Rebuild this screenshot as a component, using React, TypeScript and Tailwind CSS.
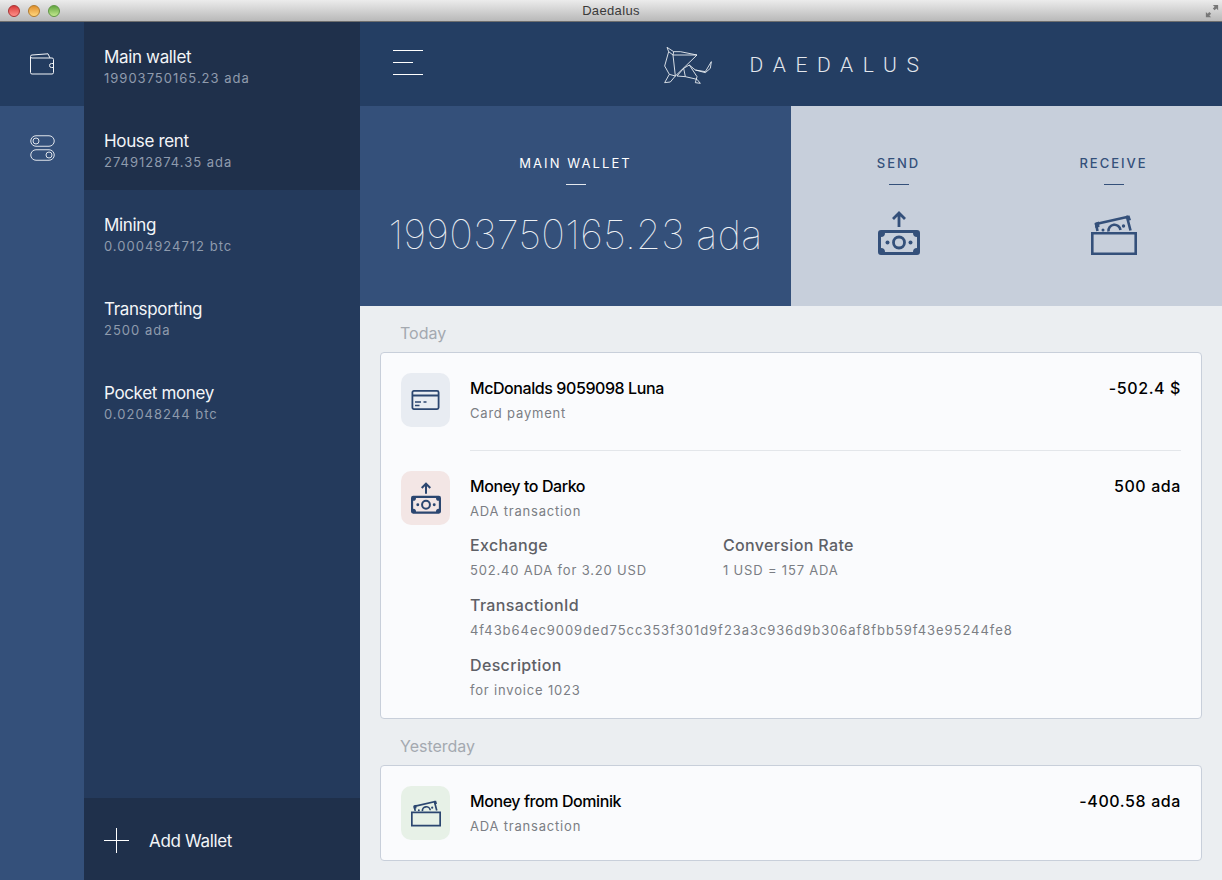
const sans = 'font-["Inter","Liberation_Sans",sans-serif]';

const wallets = [
  { name: 'Main wallet', amount: '19903750165.23 ada', active: true },
  { name: 'House rent', amount: '274912874.35 ada', active: true },
  { name: 'Mining', amount: '0.0004924712 btc', active: false },
  { name: 'Transporting', amount: '2500 ada', active: false },
  { name: 'Pocket money', amount: '0.02048244 btc', active: false },
];

function SendIcon({ className }: { className?: string }) {
  return (
    <svg viewBox="0 0 42 44" className={className} fill="none">
      <path d="M21 16V2M15 8l6-6 6 6" stroke="currentColor" strokeWidth="2.8" />
      <path
        fillRule="evenodd"
        fill="currentColor"
        d="M3 19h36a3 3 0 0 1 3 3v19a3 3 0 0 1-3 3H3a3 3 0 0 1-3-3V22a3 3 0 0 1 3-3Zm4 3a4 4 0 0 1-4 4v11a4 4 0 0 1 4 4h28a4 4 0 0 1 4-4V26a4 4 0 0 1-4-4Z"
      />
      <circle cx="21" cy="31.500" r="5.500" stroke="currentColor" strokeWidth="2.800" />
      <circle cx="9.500" cy="31.500" r="2" fill="currentColor" />
      <circle cx="32.500" cy="31.500" r="2" fill="currentColor" />
    </svg>
  );
}

function ReceiveIcon({ className }: { className?: string }) {
  return (
    <svg viewBox="0 0 46 40" className={className} fill="none">
      <path d="M5 9 36 2l3.500 13.500M5 9l1.500 7" stroke="currentColor" strokeWidth="2.600" />
      <path d="M3.500 8 8 6.500 8.500 12 4.500 13ZM35 .8 38.500.5 40 5l-3.500 1Z" fill="currentColor" />
      <path d="M17.500 16.500a6 6 0 0 1 12-1.500" stroke="currentColor" strokeWidth="2.600" />
      <circle cx="32.500" cy="11" r="1.700" fill="currentColor" />
      <circle cx="12" cy="15" r="1.500" fill="currentColor" />
      <path d="M1.300 18.300h43.400v20.400H1.300z" stroke="currentColor" strokeWidth="2.600" />
    </svg>
  );
}

function CardIcon({ className }: { className?: string }) {
  return (
    <svg viewBox="0 0 28 20" className={className} fill="none" stroke="currentColor">
      <rect x=".9" y=".9" width="26.200" height="18.200" rx="1.500" strokeWidth="1.800" />
      <path d="M.9 5.500h26.200" strokeWidth="2" />
      <path d="M3.500 12h6M12 12h3M3.500 15.500h4.500" strokeWidth="1.300" />
    </svg>
  );
}

function Logo() {
  return (
    <svg viewBox="33 28 150 114" className="w-[50px] h-[38px]" fill="none" stroke="#f0f3f7" strokeWidth="2.600" strokeLinejoin="round">
      <path d="M45 32 65 45 63 55 135 55 85 45 65 45M45 32 50 45 38 88 52 113 70 118 63 55M50 45 63 55" />
      <path d="M135 55 70 118M52 113 38 138 55 136 70 118" />
      <path d="M95 95 75 118 100 120ZM100 120 135 128 145 140 130 138 135 120 112 85 95 95" />
      <path d="M112 85 130 100 160 105 178 75 175 95 160 108 130 100" />
    </svg>
  );
}

function Field({ label, value, wide }: { label: string; value: string; wide?: boolean }) {
  return (
    <div>
      <div className="text-[16px] leading-[20px] text-[#5e6066] tracking-[0.35px] font-medium">{label}</div>
      <div className={`mt-[5px] text-[13px] leading-[20px] text-[#7b7e84] whitespace-nowrap ${wide ? 'tracking-[0.95px]' : 'tracking-[0.82px]'}`}>{value}</div>
    </div>
  );
}

function TxHead({ title, sub, amount }: { title: string; sub: string; amount: string }) {
  return (
    <div className="flex-1 flex justify-between pt-[5px]">
      <div>
        <div className="text-[16px] leading-[20px] font-medium text-black tracking-[-0.42px]">{title}</div>
        <div className="mt-[5px] text-[13px] leading-[20px] text-[#7b7e84] tracking-[0.8px]">{sub}</div>
      </div>
      <div className="text-[16px] leading-[20px] font-medium text-black tracking-[0.6px]">{amount}</div>
    </div>
  );
}

export default function App() {
  return (
    <div className={`w-[1222px] h-[880px] flex flex-col overflow-hidden ${sans}`}>
      {/* Window chrome */}
      <div className="h-[22px] shrink-0 relative flex items-center justify-center bg-gradient-to-b from-[#ececec] to-[#b9b9b9] border-b border-[#6e6e6e]">
        <div className="absolute left-[8px] top-[5px] flex gap-[8px]">
          <span className="w-[12px] h-[12px] rounded-full border border-[#a83232] bg-gradient-to-b from-[#d8383a] to-[#ff8f8a]" />
          <span className="w-[12px] h-[12px] rounded-full border border-[#b17a2c] bg-gradient-to-b from-[#e08f28] to-[#ffd77c]" />
          <span className="w-[12px] h-[12px] rounded-full border border-[#5f9644] bg-gradient-to-b from-[#62a63f] to-[#c3e98f]" />
        </div>
        <span className="text-[13px] text-[#3a3a3a] tracking-[0.35px] font-['Liberation_Sans',sans-serif]">Daedalus</span>
        <svg viewBox="0 0 16 16" className="absolute right-[3px] top-[4px] w-[14px] h-[14px]" fill="#777">
          <path d="M9 1h6v6l-2-2-2 2-2-2 2-2ZM1 15V9l2 2 2-2 2 2-2 2 2 2Z" />
        </svg>
      </div>

      <div className="flex-1 flex min-h-0">
        {/* Icon bar */}
        <div className="w-[84px] shrink-0 bg-[#34507a] flex flex-col">
          <div className="h-[84px] bg-[#233c60] flex items-center justify-center">
            <svg viewBox="0 0 24 22" className="w-[24px] h-[22px]" fill="none" stroke="#f2f4f7" strokeWidth="1">
              <path d="M.5 4v15.500A1.500 1.500 0 0 0 2 21h20a1.500 1.500 0 0 0 1.500-1.500v-13A1.500 1.500 0 0 0 22 5H2A1.500 1.500 0 0 1 .5 3.500 1.500 1.500 0 0 1 2 2L18 .8 20 5" />
              <path d="M23.500 10.500H21.500a2 2 0 0 0 0 4h2" />
            </svg>
          </div>
          <div className="h-[84px] flex items-center justify-center">
            <svg viewBox="0 0 25 26" className="w-[25px] h-[26px]" fill="none" stroke="#dfe4eb" strokeWidth="1">
              <rect x=".75" y=".75" width="23.500" height="10.500" rx="5.250" />
              <circle cx="6" cy="6" r="3" />
              <rect x=".75" y="14.750" width="23.500" height="10.500" rx="5.250" />
              <circle cx="19" cy="20" r="3" />
            </svg>
          </div>
        </div>

        {/* Wallet list */}
        <div className="w-[276px] shrink-0 bg-[#243a5c] flex flex-col">
          {wallets.map((w) => (
            <div key={w.name} className={`h-[84px] px-[20px] pt-[23px] ${w.active ? 'bg-[#1f304b]' : ''}`}>
              <div className="text-[17px] leading-[24px] text-[#f3f5f8] tracking-[-0.35px]">{w.name}</div>
              <div className="text-[13px] leading-[18px] text-[#8f9bad] tracking-[1px]">{w.amount}</div>
            </div>
          ))}
          <div className="mt-auto h-[82px] bg-[#1f304b] px-[20px] pt-[2px] flex items-center gap-[20px] text-[#f3f5f8]">
            <svg viewBox="0 0 25 25" className="w-[25px] h-[25px]" stroke="#fff" strokeWidth="1">
              <path d="M0 12.500h25M12.500 0v25" />
            </svg>
            <span className="text-[17px] tracking-[-0.35px] mt-[3px]">Add Wallet</span>
          </div>
        </div>

        {/* Main column */}
        <div className="flex-1 min-w-0 flex flex-col bg-[#ebeef1]">
          <header className="h-[84px] shrink-0 bg-[#243e63] relative flex items-center justify-center">
            <div className="absolute left-[33px] top-[28px] flex flex-col gap-[11px]">
              <span className="block w-[30px] h-px bg-white" />
              <span className="block w-[20px] h-px bg-white" />
              <span className="block w-[30px] h-px bg-white" />
            </div>
            <div className="flex items-center gap-[37px] pt-[1px] mr-[1px]">
              <Logo />
              <span className="text-[21px] font-light text-[#e3e7ed] tracking-[9.600px] font-['Roboto',sans-serif] mr-[-10px] mt-[2px]">DAEDALUS</span>
            </div>
          </header>

          <div className="h-[200px] shrink-0 flex">
            <div className="w-[431px] bg-[#34507a] flex flex-col items-center pt-[48px] text-white">
              <div className="text-[13px] leading-[18px] tracking-[2.100px]">MAIN WALLET</div>
              <span className="block w-[20px] h-px bg-[#e4e8ee] mt-[12px]" />
              <div className="mt-[26px] text-[40px] leading-[48px] font-thin text-[#eef1f5] tracking-[0.3px] whitespace-nowrap">19903750165.23 ada</div>
            </div>
            <div className="flex-1 bg-[#c7cfdb] flex text-[#34507a]">
              <div className="w-[215px] flex flex-col items-center pt-[48px]">
                <div className="text-[13px] leading-[18px] font-medium tracking-[2px]">SEND</div>
                <span className="block w-[20px] h-px bg-[#34507a] mt-[12px]" />
                <SendIcon className="w-[42px] h-[44px] mt-[26px]" />
              </div>
              <div className="w-[215px] flex flex-col items-center pt-[48px]">
                <div className="text-[13px] leading-[18px] font-medium tracking-[2px]">RECEIVE</div>
                <span className="block w-[20px] h-px bg-[#34507a] mt-[12px]" />
                <ReceiveIcon className="w-[46px] h-[40px] mt-[30px]" />
              </div>
            </div>
          </div>

          <div className="flex-1 min-h-0 px-[20px]">
            <div className="h-[46px] pl-[20px] pt-[17px] text-[16px] leading-[20px] text-[#a4a9b0]">Today</div>
            <div className="h-[367px] rounded-[4px] border border-[#c8cfda] bg-[#fafbfd] px-[20px] pt-[20px]">
              <div className="flex gap-[20px]">
                <div className="w-[49px] h-[54px] rounded-[10px] bg-[#e8ecf2] flex items-center justify-center shrink-0 text-[#2b4670]">
                  <CardIcon className="w-[29px] h-[20px]" />
                </div>
                <TxHead title="McDonalds 9059098 Luna" sub="Card payment" amount="-502.4 $" />
              </div>
              <div className="ml-[69px] mt-[23px] h-px bg-[#e3e6ea]" />
              <div className="flex gap-[20px] mt-[20px]">
                <div className="w-[49px] h-[54px] rounded-[10px] bg-[#f3e6e5] flex items-center justify-center shrink-0 text-[#2b4670]">
                  <SendIcon className="w-[30px] h-[32px]" />
                </div>
                <div className="flex-1">
                  <TxHead title="Money to Darko" sub="ADA transaction" amount="500 ada" />
                  <div className="mt-[14px] flex">
                    <div className="w-[253px]">
                      <Field label="Exchange" value="502.40 ADA for 3.20 USD" />
                    </div>
                    <Field label="Conversion Rate" value="1 USD = 157 ADA" />
                  </div>
                  <div className="mt-[15px]">
                    <Field wide label="TransactionId" value="4f43b64ec9009ded75cc353f301d9f23a3c936d9b306af8fbb59f43e95244fe8" />
                  </div>
                  <div className="mt-[15px]">
                    <Field label="Description" value="for invoice 1023" />
                  </div>
                </div>
              </div>
            </div>
            <div className="h-[46px] pl-[20px] pt-[17px] text-[16px] leading-[20px] text-[#a4a9b0]">Yesterday</div>
            <div className="h-[96px] rounded-[4px] border border-[#c8cfda] bg-[#fafbfd] px-[20px] pt-[20px]">
              <div className="flex gap-[20px]">
                <div className="w-[49px] h-[54px] rounded-[10px] bg-[#e7f1e7] flex items-center justify-center shrink-0 text-[#2b4670]">
                  <ReceiveIcon className="w-[30px] h-[27px]" />
                </div>
                <TxHead title="Money from Dominik" sub="ADA transaction" amount="-400.58 ada" />
              </div>
            </div>
          </div>
        </div>
      </div>
    </div>
  );
}
